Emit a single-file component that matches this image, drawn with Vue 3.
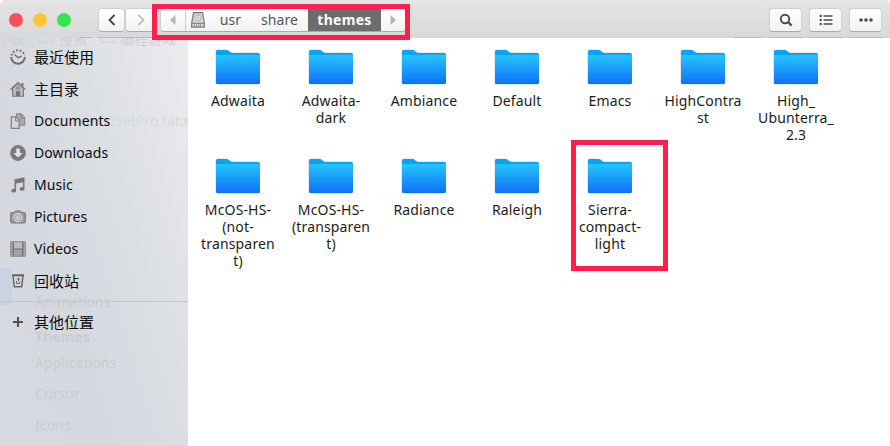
<script setup>
const places = [
  { icon: 'recent', name: '最近使用', cjk: true },
  { icon: 'home', name: '主目录', cjk: true },
  { icon: 'docs', name: 'Documents' },
  { icon: 'down', name: 'Downloads' },
  { icon: 'music', name: 'Music' },
  { icon: 'camera', name: 'Pictures' },
  { icon: 'video', name: 'Videos' },
  { icon: 'trash', name: '回收站', cjk: true },
]
const folders = [
  ['Adwaita'], ['Adwaita-', 'dark'], ['Ambiance'], ['Default'], ['Emacs'], ['HighContra', 'st'], ['High_', 'Ubunterra_', '2.3'],
  ['McOS-HS-', '(not-', 'transparen', 't)'], ['McOS-HS-', '(transparen', 't)'], ['Radiance'], ['Raleigh'], ['Sierra-', 'compact-', 'light'],
]
</script>

<template>
  <div class="window">
    <header class="bar">
      <div class="lights"><i class="red"></i><i class="yellow"></i><i class="green"></i></div>
      <div class="nav">
        <button><svg width="10" height="12" viewBox="0 0 10 12"><path d="M7.5 1 2.5 6l5 5" fill="none" stroke="#444" stroke-width="1.8" /></svg></button>
        <button class="next"><svg width="10" height="12" viewBox="0 0 10 12"><path d="M2.5 1 7.5 6l-5 5" fill="none" stroke="#b5b5b5" stroke-width="1.6" /></svg></button>
      </div>
      <div class="path">
        <span class="arrow left"><svg width="6" height="10" viewBox="0 0 6 10"><path d="M5.5 0v10L0 5z" fill="#b5b5b5" /></svg></span>
        <span class="disk"><svg width="14" height="16" viewBox="0 0 14 16"><path d="M2.5.7h9L13.3 11v4.2H.7V11z" fill="#d8d8d8" stroke="#777" stroke-width="1.2" /><ellipse cx="7" cy="5.8" rx="3.3" ry="3" fill="#e8e8e8" stroke="#aaa" /><circle cx="7" cy="5.8" r="1" fill="#aaa" /><path d="M1 11.3h12" stroke="#777" /><path d="M3 13.5h8" stroke="#888" stroke-width="2" stroke-dasharray="1 1" /></svg></span>
        <span class="crumb usr">usr</span>
        <span class="crumb share">share</span>
        <span class="crumb current">themes</span>
        <span class="arrow right"><svg width="6" height="10" viewBox="0 0 6 10"><path d="M.5 0v10L6 5z" fill="#b5b5b5" /></svg></span>
      </div>
      <div class="tools">
        <button><svg width="14" height="14" viewBox="0 0 14 14"><circle cx="6" cy="6" r="4.2" fill="none" stroke="#4c4c4c" stroke-width="1.9" /><path d="m9 9 3.6 3.6" stroke="#4c4c4c" stroke-width="2.2" /></svg></button>
        <button><svg width="14" height="12" viewBox="0 0 14 12"><path d="M4.5 2h9M4.5 6h9M4.5 10h9" stroke="#4c4c4c" stroke-width="1.7" /><g fill="#4c4c4c"><circle cx="1.7" cy="2" r="1.2" /><circle cx="1.7" cy="6" r="1.2" /><circle cx="1.7" cy="10" r="1.2" /></g></svg></button>
        <button><svg width="14" height="4" viewBox="0 0 14 4"><g fill="#4c4c4c"><circle cx="2" cy="2" r="1.8" /><circle cx="7" cy="2" r="1.8" /><circle cx="12" cy="2" r="1.8" /></g></svg></button>
      </div>
    </header>
    <div class="body">
      <aside class="side">
        <div class="ghosts">
          <span class="g-top">小说</span>
          <svg class="t-icon" width="16" height="14" viewBox="0 0 16 14"><path d="M1 3V1h5l1.5 2H15v9.500H1z" fill="none" stroke="#cdd2d9" /></svg>
          <span class="g-top t2">搜索</span>
          <svg class="t-icon second" width="16" height="14" viewBox="0 0 16 14"><path d="M1 3V1h5l1.500 2H15v9.500H1z" fill="none" stroke="#cdd2d9" /></svg>
          <span class="g-top t3">编程游戏</span>
          <span class="g-file">RoundSetPro.tar.x</span>
          <i class="g-block"></i>
          <span class="g g1">Animations</span><span class="g g2">Themes</span><span class="g g3">Applications</span><span class="g g4">Cursor</span><span class="g g5">Icons</span>
        </div>
        <div v-for="p in places" :key="p.name" class="place">
          <svg width="16" height="16" viewBox="0 0 16 16">
            <g v-if="p.icon === 'recent'" fill="none" stroke="#707070"><path d="M1.200 8a6.800 6.800 0 0 0 13.600 0" stroke-width="2" /><path d="M1.400 6.500A6.800 6.800 0 0 1 14.600 6.500" stroke-width="2" stroke-dasharray="1.800 1.700" /><path d="m4.500 5.500 3.500 3.200 3.500-1.500" stroke-width="1.500" /></g>
            <g v-else-if="p.icon === 'home'" stroke="#777"><path d="M2.500 7.500v7.800h11V7.500L8 2.500z" fill="#b5b7b9" /><path d="M.6 8.600 8 1.800l7.400 6.800" fill="none" stroke-width="1.400" /><path d="M12.500 2v3" stroke-width="2" /><path d="M6.500 15v-4.500h3V15" fill="#777" /><circle cx="8" cy="7" r="1.200" fill="#ddd" /></g>
            <g v-else-if="p.icon === 'docs'" stroke="#828282"><path d="M6.500.8h5l3.200 3.700v7.700H6.500z" fill="#aaa" /><path d="M11 1v4h4" fill="none" /><path d="M1.300 3.800h4.500l3.400 3.500v8H1.300z" fill="#d3d6da" stroke-width="1.300" /><path d="M5.500 4v4h4" fill="none" /></g>
            <g v-else-if="p.icon === 'down'"><circle cx="8" cy="8" r="7.900" fill="#7b7b7b" /><path d="M6.300 3.400h3.400V8h2.800L8 12.500 3.500 8h2.800z" fill="#e5e8eb" /></g>
            <g v-else-if="p.icon === 'music'" fill="#777"><path d="M4.500 2.300 14.500.3v11.500h-1.600V5.200L6.100 6.600v7H4.500z" /><ellipse cx="3.700" cy="13.700" rx="2.500" ry="1.900" /><ellipse cx="12.100" cy="11.900" rx="2.500" ry="1.900" /></g>
            <g v-else-if="p.icon === 'camera'" stroke="#777"><path d="M.6 4.500q0-1 1-1h2.600L5.500 2h5l1.300 1.500h2.600q1 0 1 1v8q0 1.500-1 1.500H1.600q-1 0-1-1.500z" fill="#999" /><circle cx="8" cy="8.600" r="4" fill="#999" stroke="#ddd" stroke-width="1.200" /><circle cx="8" cy="8.600" r="2" fill="#bbb" stroke="#ddd" /></g>
            <g v-else-if="p.icon === 'video'"><path d="M.3.3h15.400v15.400H.3z" fill="#777" /><path d="M4 1.200h8v6.300H4z" fill="#bbb" /><path d="M4 8.600h8v6.200H4z" fill="#a2a2a2" /><path d="M1.800 1.200v14M14.200 1.200v14" stroke="#c9c9c9" stroke-width="1.400" stroke-dasharray="1.500 1" /></g>
            <g v-else fill="none" stroke="#666"><path d="M3 2.500h10l-1.300 11.300H4.300z" stroke-width="1.500" /><path d="M2 2.200h12" stroke-width="1.800" /><path d="m6.800 6.500 1.700-1.500 1.500 1.500M8.500 5.500v2.500M6.500 10.500V8M7 10.500h2.500v-2" /></g>
          </svg>
          <span :class="{ cjk: p.cjk }" class="name">{{ p.name }}</span>
        </div>
        <div class="rule"></div>
        <div class="place other">
          <svg width="16" height="16" viewBox="0 0 16 16"><path d="M8 3v10M3 8h10" stroke="#505050" stroke-width="2" /></svg>
          <span class="name cjk">其他位置</span>
        </div>
      </aside>
      <main class="grid">
        <div v-for="(f, i) in folders" :key="i" class="item">
          <svg width="46" height="36" viewBox="0 0 46 36">
            <defs><linearGradient id="face" x2="0" y2="1"><stop stop-color="#25c5ff" /><stop offset="1" stop-color="#1070f5" /></linearGradient></defs>
            <path d="M.5 34V2.500Q.5.5 2.500.5H11q2 0 3 1.200t3 1.800h26q1.500 0 1.500 1.500v28.500q0 2-2 2H2.500q-2 0-2-1.500z" fill="#aeb9c2" opacity=".6" />
            <path d="M1 7V3q0-2 2-2h8q2 0 3 1.300T17 4h26q2 0 2 2v2H1z" fill="#00a5fa" />
            <path d="M1 6h44v27.500q0 1.500-1.500 1.500h-41Q1 35 1 33.500z" fill="url(#face)" />
          </svg>
          <div class="label"><div v-for="l in f" :key="l">{{ l }}</div></div>
        </div>
      </main>
    </div>
    <div class="mark mark-path"></div>
    <div class="mark mark-folder"></div>
  </div>
</template>

<style>
body { margin: 0; background: #fff; }
</style>
<style scoped>
.window { position: relative; width: 890px; height: 446px; overflow: hidden; font: 14px/17px "Noto Sans", "Noto Sans CJK SC", sans-serif; color: #1c1c1c; background: #fff; }
.bar { display: flex; align-items: center; box-sizing: border-box; height: 38px; padding: 1px 8px 0 9px; background: linear-gradient(90deg, transparent 79px, #bbb 79px 92px, transparent 92px 98px, #bbb 98px 152px, transparent 152px 733px, #bbb 733px 763px, transparent 763px 769px, #bbb 769px 803px, transparent 803px 809px, #bbb 809px 843px, transparent 843px 849px, #bbb 849px 883px, transparent 883px) 0 100% / 100% 1px no-repeat, linear-gradient(#e4e4e4, #d8d8d8); border-radius: 5px 5px 0 0; }
.lights { display: flex; gap: 10px; width: 89px; }
.lights i { width: 14px; height: 14px; border-radius: 50%; }
.red { background: #f5515b; } .yellow { background: #fbc435; } .green { background: #37e34a; }
.nav { display: flex; width: 62px; }
button { display: flex; align-items: center; justify-content: center; box-sizing: border-box; width: 27px; height: 24px; padding: 0; border: 1px solid #cfcfcf; border-bottom-color: #aaa; border-radius: 4px; background: linear-gradient(#fff, #f2f2f2); }
.next { width: 31px; }
.path { display: flex; box-sizing: border-box; width: 246px; height: 24px; border: 1px solid #cfcfcf; border-bottom-color: #aaa; border-radius: 4px; background: linear-gradient(#fff, #f2f2f2); overflow: hidden; }
.path span { display: flex; align-items: center; justify-content: center; }
.arrow { width: 24px; }
.left { border-right: 1px solid #ccc; }
.disk { width: 24px; }
.crumb { color: #555; letter-spacing: .1px; }
.usr { width: 41px; }
.share { width: 57px; }
.path .current { width: 73px; color: #fff; font-weight: 700; letter-spacing: .3px; background: #6c6c6c; }
.tools { display: flex; gap: 7px; margin-left: auto; }
.tools button { width: 33px; }
.body { display: flex; height: 408px; }
.side { position: relative; width: 188px; padding-top: 3px; box-sizing: border-box; background: linear-gradient(72deg, #d6dae0 0%, #d5d9df 35%, #dcdfe4 65%, #ebecef 100%); color: #0c0c0c; overflow: hidden; }
.place { position: relative; display: flex; align-items: center; gap: 8px; height: 32px; padding-left: 10px; }
.name { padding-bottom: 2px; letter-spacing: .1px; }
.cjk { font-family: "Noto Sans CJK SC", sans-serif; font-size: 15px; letter-spacing: 0; }
.rule { position: relative; height: 1px; margin-top: 4px; background: #c2c5c9; }
.other { margin-top: 4px; }
.ghosts span, .ghosts i, .ghosts svg { position: absolute; white-space: nowrap; color: #c9cdd1; }
.ghosts .g-top { top: -8px; left: -3px; color: #cdd2d9; }
.ghosts .t-icon { top: -8px; left: 38px; } .ghosts .second { left: 100px; }
.ghosts .t2 { left: 59px; } .ghosts .t3 { left: 120px; }
.ghosts .g-file { top: 74px; left: 72px; color: #d4d8dd; }
.ghosts .g-block { left: 0; top: 230px; width: 12px; height: 37px; background: #c9d3e2; }
.ghosts .g { left: 35px; letter-spacing: .1px; }
.ghosts .g1 { top: 255px; } .ghosts .g2 { top: 290px; font-weight: 700; } .ghosts .g3 { top: 316px; } .ghosts .g4 { top: 347px; } .ghosts .g5 { top: 378px; }
.grid { display: grid; grid-template-columns: repeat(7, 93px); grid-auto-rows: 109px; padding: 11px 0 0 3px; align-content: start; }
.item { display: flex; flex-direction: column; align-items: center; }
.item svg { flex: none; }
.label { margin: 7px 0 0 1px; text-align: center; white-space: nowrap; letter-spacing: .15px; }
.mark { position: absolute; box-sizing: border-box; border: 5px solid #fd1e4b; }
.mark-path { left: 152px; top: 4px; width: 258px; height: 36px; }
.mark-folder { left: 571px; top: 140px; width: 97px; height: 131px; }
</style>
